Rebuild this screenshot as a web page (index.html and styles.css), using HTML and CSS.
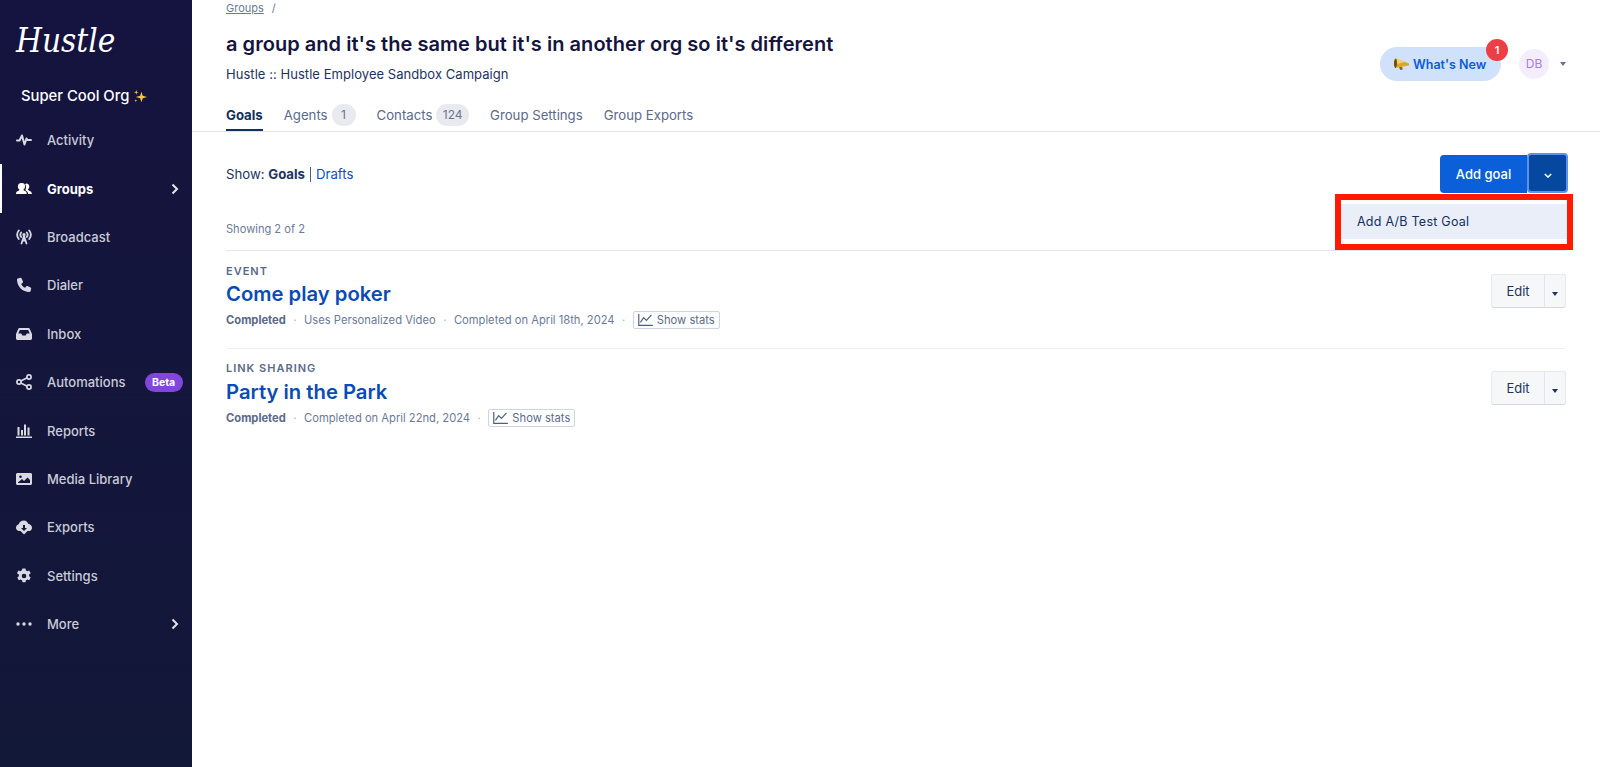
FILE: index.html
```html
<!DOCTYPE html>
<html lang="en">

<head>
    <meta charset="UTF-8">
    <title>Hustle - Goals</title>
    <link rel="stylesheet" href="styles.css">
</head>

<body>
    <aside class="sidebar">
        <div class="logo">Hustle</div>
        <div class="org">Super Cool Org
            <svg class="sparkle" viewBox="0 0 16 16" width="15" height="15">
                <path fill="#f5c83c" d="M9 3l1.400 4.100L15 8.500l-4.600 1.400L9 14l-1.400-4.100L3 8.500l4.600-1.400z" />
                <path fill="#f5c83c" d="M3.500 1l.6 1.900 1.900.6-1.900.6-.6 1.900-.6-1.900L1 3.500l1.900-.6z" />
                <path fill="#f5c83c" d="M3 11l.4 1.100 1.100.4-1.100.4L3 14l-.4-1.100-1.100-.4 1.100-.4z" />
            </svg>
        </div>
        <nav class="nav">
            <a class="nav-item">
                <svg class="nav-icon" viewBox="0 0 16 16"><path fill="none" stroke="currentColor" stroke-width="2" stroke-linejoin="round" stroke-linecap="round" d="M1 8.500h2.500l2.500-5 2.500 9 2-6 1 1.500H15" /></svg>
                Activity
            </a>
            <a class="nav-item active">
                <svg class="nav-icon" viewBox="0 0 16 16"><path fill="currentColor" d="M5.800 2a3.200 3.200 0 0 1 3.200 3.400c0 1.400-.7 2.700-1.700 3.300.1.500.4.800 1.100 1 1.600.6 2.400 1.200 2.400 3.300H0c0-2.100.9-2.700 2.500-3.300.7-.2 1-.5 1.100-1-1-.6-1.700-1.900-1.700-3.300A3.200 3.200 0 0 1 5.800 2zM10.200 2.500c1.800 0 3.100 1.300 3.100 3.100 0 1.200-.5 2.300-1.400 2.900.1.500.4.800 1 1 1.400.5 2.600 1.100 3.100 3.500h-3.800c-.2-2-1.100-3-2.900-3.800 1-1.600 1-4.400-.2-6 .5-.4.900-.7 1.100-.7z" /></svg>
                Groups
                <svg class="nav-chevron" viewBox="0 0 8 12"><path fill="none" stroke="currentColor" stroke-width="2" d="M1.500 1.500L6 6l-4.500 4.500" /></svg>
            </a>
            <a class="nav-item">
                <svg class="nav-icon" viewBox="0 0 16 16"><g fill="none" stroke="currentColor" stroke-width="1.800" stroke-linecap="round"><path d="M2.800 1.500c-2 2.500-2 6 0 8.500M13.200 1.500c2 2.500 2 6 0 8.500M5.200 3.500c-1 1.300-1 3.200 0 4.500M10.800 3.500c1 1.300 1 3.200 0 4.500M8 7l-2.500 7.500M8 7l2.500 7.500M6.500 11.500h3" /></g><circle cx="8" cy="5.700" r="1.600" fill="currentColor" /></svg>
                Broadcast
            </a>
            <a class="nav-item">
                <svg class="nav-icon" viewBox="0 0 16 16"><path fill="currentColor" d="M4.500.800L1.800 1.500C1.300 1.600 1 2 1 2.500 1 9.500 6.500 15 13.500 15c.5 0 .9-.3 1-.8l.7-2.700c.1-.4-.1-.9-.6-1.100L11.500 9c-.4-.2-.9-.1-1.200.3L9.100 10.800C7.300 9.900 6 8.500 5.200 6.900l1.500-1.200c.4-.3.5-.8.300-1.200L5.600 1.400C5.400.900 4.900.700 4.500.800z" /></svg>
                Dialer
            </a>
            <a class="nav-item">
                <svg class="nav-icon" viewBox="0 0 16 16"><path fill="currentColor" fill-rule="evenodd" d="M3.500 2h9c.6 0 1.100.3 1.300.9L16 8v4.500c0 .8-.7 1.500-1.500 1.500h-13C.7 14 0 13.300 0 12.500V8l2.200-5.100c.2-.6.7-.9 1.300-.9zM3.800 4L2.300 7.500h3l1 2h3.400l1-2h3l-1.500-3.500z" /></svg>
                Inbox
            </a>
            <a class="nav-item">
                <svg class="nav-icon" viewBox="0 0 16 16"><g fill="none" stroke="currentColor" stroke-width="1.700"><circle cx="3" cy="8" r="2.100" /><circle cx="13" cy="3" r="2.100" /><circle cx="13" cy="13" r="2.100" /><path d="M4.800 7l6.400-3.200M4.800 9l6.400 3.200" /></g></svg>
                Automations
                <span class="beta">Beta</span>
            </a>
            <a class="nav-item">
                <svg class="nav-icon" viewBox="0 0 16 16"><path fill="currentColor" d="M0 13.500h16V15H0zM1.500 4h2v8.500h-2zM5 7h2v5.500H5zM8 1.500h2v11H8zM11.500 4.500h2v8h-2z" /></svg>
                Reports
            </a>
            <a class="nav-item">
                <svg class="nav-icon" viewBox="0 0 16 16"><path fill="currentColor" fill-rule="evenodd" d="M1.500 2h13c.8 0 1.500.7 1.500 1.500v9c0 .8-.7 1.500-1.500 1.500h-13C.7 14 0 13.300 0 12.500v-9C0 2.700.7 2 1.500 2zM2 4v8h12V9l-2.500-2.500L8 10 6 8l-4 3.500zm2.500.500a1.300 1.300 0 1 0 0 2.600 1.300 1.300 0 0 0 0-2.600z" /></svg>
                Media Library
            </a>
            <a class="nav-item">
                <svg class="nav-icon" viewBox="0 0 16 16"><path fill="currentColor" fill-rule="evenodd" d="M8 1.500c2 0 3.700 1.400 4.200 3.300C14.400 5.200 16 6.800 16 8.800c0 1.700-1.200 3.100-2.700 3.200H11.500L8 15.500 4.500 12H2.700C1.100 11.700 0 10.400 0 8.800c0-1.700 1.100-3.100 2.700-3.600C3.200 3 5.400 1.500 8 1.500zM7 6v3H5l3 3 3-3H9V6z" /></svg>
                Exports
            </a>
            <a class="nav-item">
                <svg class="nav-icon" viewBox="0 0 16 16"><path fill="currentColor" fill-rule="evenodd" d="M6.500.500h3l.4 2.100c.5.200.9.400 1.300.7l2-.7 1.500 2.600-1.600 1.400a5 5 0 0 1 0 1.600l1.600 1.400-1.500 2.600-2-.7c-.4.300-.8.500-1.300.7l-.4 2.100h-3l-.4-2.100a5 5 0 0 1-1.300-.7l-2 .7-1.500-2.600 1.600-1.400a5 5 0 0 1 0-1.600L.9 5.200l1.500-2.600 2 .7c.4-.3.800-.5 1.300-.7zM8 5.700a2.300 2.300 0 1 0 0 4.600 2.300 2.300 0 0 0 0-4.600z" /></svg>
                Settings
            </a>
            <a class="nav-item">
                <svg class="nav-icon" viewBox="0 0 16 16"><g fill="currentColor"><circle cx="2" cy="8" r="1.700" /><circle cx="8" cy="8" r="1.700" /><circle cx="14" cy="8" r="1.700" /></g></svg>
                More
                <svg class="nav-chevron" viewBox="0 0 8 12"><path fill="none" stroke="currentColor" stroke-width="2" d="M1.500 1.500L6 6l-4.500 4.500" /></svg>
            </a>
        </nav>
    </aside>

    <div class="main">
        <header class="header">
            <div class="breadcrumb"><a class="crumb">Groups</a><span class="crumb-sep">/</span></div>
            <div class="title-row">
                <div>
                    <h1>a group and it's the same but it's in another org so it's different</h1>
                    <div class="subtitle">Hustle :: Hustle Employee Sandbox Campaign</div>
                </div>
                <div class="header-actions">
                    <div class="whats-new">
                        <svg class="megaphone" viewBox="0 0 16 12" width="16" height="12">
                            <path fill="#8f6510" d="M5 9l3-.6.800 3-2.600.6z" />
                            <path fill="#d9a92e" d="M2 .5l13 5v2L1 10z" />
                            <path fill="#f3d465" d="M2 .5l9 3.500-8.500 2z" />
                            <path fill="#6e4c0a" d="M1.600.5c.9 0 1.400 2.200 1.400 4.800S2.300 10 1.400 10 0 7.900 0 5.300 .7.500 1.600.5z" />
                        </svg>
                        What's New
                        <span class="count">1</span>
                    </div>
                    <div class="avatar">DB</div>
                    <span class="caret caret-user"></span>
                </div>
            </div>
            <div class="tabs">
                <a class="tab active">Goals</a>
                <a class="tab">Agents <span class="pill">1</span></a>
                <a class="tab">Contacts <span class="pill">124</span></a>
                <a class="tab">Group Settings</a>
                <a class="tab">Group Exports</a>
            </div>
        </header>

        <section class="content">
            <div class="toolbar">
                <div class="show">Show: <b>Goals</b><span class="show-sep"></span><a class="drafts">Drafts</a></div>
                <div class="add-group">
                    <button class="add-btn">Add goal</button>
                    <button class="add-toggle">
                        <svg viewBox="0 0 10 6" width="8" height="5"><path fill="none" stroke="#fff" stroke-width="1.800" d="M1 1l4 4 4-4" /></svg>
                    </button>
                    <div class="menu-highlight">
                        <div class="menu-item">Add A/B Test Goal</div>
                    </div>
                </div>
            </div>
            <div class="showing">Showing 2 of 2</div>

            <div class="goal">
                <div>
                    <div class="goal-type">EVENT</div>
                    <a class="goal-name">Come play poker</a>
                    <div class="goal-meta">
                        <b>Completed</b><span class="dot">·</span>Uses Personalized Video<span class="dot">·</span>Completed on April 18th, 2024<span class="dot">·</span>
                        <span class="stats">
                            <svg viewBox="0 0 16 13" width="15" height="12"><path fill="none" stroke="#4d5f80" stroke-width="1.300" d="M.7 0v12.300H16M2.500 9l3.500-5 3 3 5.500-6" /></svg>
                            Show stats
                        </span>
                    </div>
                </div>
                <div class="edit-group">
                    <button class="edit-btn">Edit</button>
                    <button class="edit-toggle"><span class="caret caret-dark"></span></button>
                </div>
            </div>

            <div class="goal">
                <div>
                    <div class="goal-type">LINK SHARING</div>
                    <a class="goal-name">Party in the Park</a>
                    <div class="goal-meta">
                        <b>Completed</b><span class="dot">·</span>Completed on April 22nd, 2024<span class="dot">·</span>
                        <span class="stats">
                            <svg viewBox="0 0 16 13" width="15" height="12"><path fill="none" stroke="#4d5f80" stroke-width="1.300" d="M.7 0v12.300H16M2.500 9l3.500-5 3 3 5.500-6" /></svg>
                            Show stats
                        </span>
                    </div>
                </div>
                <div class="edit-group">
                    <button class="edit-btn">Edit</button>
                    <button class="edit-toggle"><span class="caret caret-dark"></span></button>
                </div>
            </div>
        </section>
    </div>
</body>

</html>
```

FILE: styles.css
```css
* {
    margin: 0;
    padding: 0;
    box-sizing: border-box;
}

body {
    font-family: Inter, "Liberation Sans", sans-serif;
    background: #ffffff;
    color: #14143c;
    height: 767px;
    display: flex;
    overflow: hidden;
}

button {
    font-family: inherit;
    border: none;
}

/* sidebar */
.sidebar {
    width: 192px;
    flex-shrink: 0;
    background: linear-gradient(180deg, #15133f 0%, #121838 100%);
    color: #c9cbd8;
}

.logo {
    font-family: "DejaVu Serif", serif;
    font-style: italic;
    font-stretch: condensed;
    font-size: 33px;
    line-height: 40px;
    color: #ffffff;
    padding: 21px 0 0 16px;
    height: 76px;
}

.org {
    display: flex;
    align-items: center;
    gap: 4px;
    height: 40px;
    padding: 0 0 0 21px;
    font-size: 14.800px;
    font-weight: 500;
    color: #ffffff;
}

.nav-item {
    display: flex;
    align-items: center;
    height: 48.400px;
    padding-left: 14px;
    font-size: 13px;
    font-weight: 500;
    border-left: 2px solid transparent;
}

.nav-item.active {
    border-left-color: #ffffff;
    color: #ffffff;
    font-weight: 700;
}

.nav-icon {
    width: 16px;
    height: 16px;
    margin-right: 15px;
    flex-shrink: 0;
    color: #d8d9e2;
}

.nav-item.active .nav-icon {
    color: #ffffff;
}

.nav-chevron {
    width: 8px;
    height: 12px;
    margin-left: auto;
    margin-right: 13px;
    color: #e4e5ec;
}

.beta {
    background: #8246dc;
    color: #ffffff;
    font-size: 10.500px;
    font-weight: 700;
    line-height: 19px;
    height: 19px;
    padding: 0 7.500px;
    border-radius: 10px;
    margin-left: 19px;
}

/* header */
.main {
    flex: 1;
    min-width: 0;
}

.header {
    height: 132px;
    border-bottom: 1px solid #dfe2ec;
    padding: 0 34px;
}

.breadcrumb {
    height: 16px;
    font-size: 11px;
    line-height: 16px;
    color: #6b7a99;
}

.crumb {
    text-decoration: underline;
}

.crumb-sep {
    margin-left: 8px;
}

.title-row {
    display: flex;
    justify-content: space-between;
    height: 88px;
}

h1 {
    font-size: 20px;
    font-weight: 600;
    line-height: 28px;
    margin-top: 14px;
    letter-spacing: 0.040px;
    color: #14143c;
}

.subtitle {
    font-size: 13px;
    line-height: 18px;
    margin-top: 7px;
    letter-spacing: 0.050px;
    color: #1d3460;
}

.header-actions {
    display: flex;
    align-items: center;
    height: 34px;
    margin-top: 31px;
}

.whats-new {
    position: relative;
    display: flex;
    align-items: center;
    gap: 3px;
    width: 121px;
    height: 34px;
    padding-left: 14px;
    background: #d0e2fb;
    border-radius: 17px;
    color: #0b5cd5;
    font-size: 12.500px;
    font-weight: 600;
}

.count {
    position: absolute;
    top: -8px;
    right: -7px;
    width: 22px;
    height: 22px;
    border-radius: 50%;
    background: #ee3e45;
    color: #ffffff;
    font-size: 11px;
    font-weight: 600;
    text-align: center;
    line-height: 22px;
}

.avatar {
    width: 30px;
    height: 30px;
    margin-left: 18px;
    border-radius: 50%;
    background: #f4edfd;
    color: #a779ee;
    font-size: 12px;
    text-align: center;
    line-height: 30px;
}

.caret {
    display: inline-block;
    border-left: 3.500px solid transparent;
    border-right: 3.500px solid transparent;
    border-top: 4px solid #5f7396;
}

.caret-user {
    margin-left: 11px;
}

.caret-dark {
    border-top-color: #1d3460;
}

.tabs {
    display: flex;
    gap: 21px;
    height: 27px;
}

.tab {
    display: flex;
    align-items: flex-start;
    gap: 4px;
    height: 27px;
    font-size: 13.200px;
    line-height: 22px;
    color: #5a6a8a;
}

.tab.active {
    font-weight: 700;
    color: #14305f;
    border-bottom: 2px solid #14305f;
}

.pill {
    background: #e8eaef;
    border-radius: 11px;
    min-width: 24px;
    height: 22px;
    padding: 0 6.500px;
    text-align: center;
    font-size: 12px;
    color: #68778f;
}

/* content */
.content {
    padding: 0 34px;
}

.toolbar {
    display: flex;
    justify-content: space-between;
    align-items: flex-start;
    padding-top: 23px;
}

.show {
    font-size: 13.200px;
    line-height: 38px;
    color: #1d3460;
}

.show b {
    font-weight: 700;
}

.show-sep {
    display: inline-block;
    width: 1px;
    height: 15px;
    background: #4d5f80;
    margin: 0 5px;
    vertical-align: -3px;
}

.drafts {
    color: #0b50c0;
}

.add-group {
    position: relative;
    display: flex;
    height: 38px;
    margin-right: -2px;
}

.add-btn {
    width: 87px;
    background: #0b5fd8;
    color: #ffffff;
    font-size: 13px;
    font-weight: 500;
    border-radius: 4px 0 0 4px;
}

.add-toggle {
    width: 41px;
    height: 40px;
    margin-top: -2px;
    background: #06489f;
    border: 2px solid #5b93ec;
    border-radius: 4px;
}

.menu-highlight {
    position: absolute;
    top: 39px;
    right: -5px;
    width: 238px;
    height: 56px;
    border: 6px solid #ff1a00;
    background: #ffffff;
    padding-top: 4px;
}

.menu-item {
    height: 35px;
    line-height: 35px;
    background: #e9eef8;
    padding-left: 16px;
    font-size: 12.500px;
    letter-spacing: 0.250px;
    color: #14305f;
}

.showing {
    font-size: 11.100px;
    line-height: 16px;
    color: #6b7a99;
    margin-top: 28px;
    padding-bottom: 13px;
    border-bottom: 1px solid #e4e7ef;
}

.goal {
    display: flex;
    justify-content: space-between;
    height: 97.500px;
    padding-top: 11.500px;
    border-bottom: 1px solid #edeff5;
}

.goal:last-child {
    border-bottom: none;
}

.goal-type {
    font-size: 11px;
    font-weight: 600;
    letter-spacing: 1px;
    line-height: 16.500px;
    color: #5a6a8a;
}

.goal-name {
    display: block;
    font-size: 20.250px;
    font-weight: 600;
    line-height: 30px;
    color: #0b4bb5;
}

.goal-meta {
    display: flex;
    align-items: center;
    font-size: 11.200px;
    line-height: 18px;
    margin-top: 2px;
    color: #6b7a99;
}

.goal-meta b {
    font-weight: 700;
    color: #5a6a8a;
}

.dot {
    margin: 0 7.500px;
    color: #a7b1c4;
}

.stats {
    display: flex;
    align-items: center;
    gap: 4px;
    height: 18px;
    padding: 0 4px;
    border: 1px solid #ced4e0;
    border-radius: 2px;
    color: #5a6a8a;
}

.edit-group {
    display: flex;
    height: 34px;
    margin-top: 11px;
    border: 1px solid #e6e9ef;
    border-bottom-color: #d3d8e2;
    border-radius: 3px;
    background: #f6f7f9;
}

.edit-btn {
    width: 53px;
    background: none;
    font-size: 13px;
    color: #1d3460;
    border-right: 1px solid #e2e5ec;
}

.edit-toggle {
    width: 20px;
    background: none;
}
```
